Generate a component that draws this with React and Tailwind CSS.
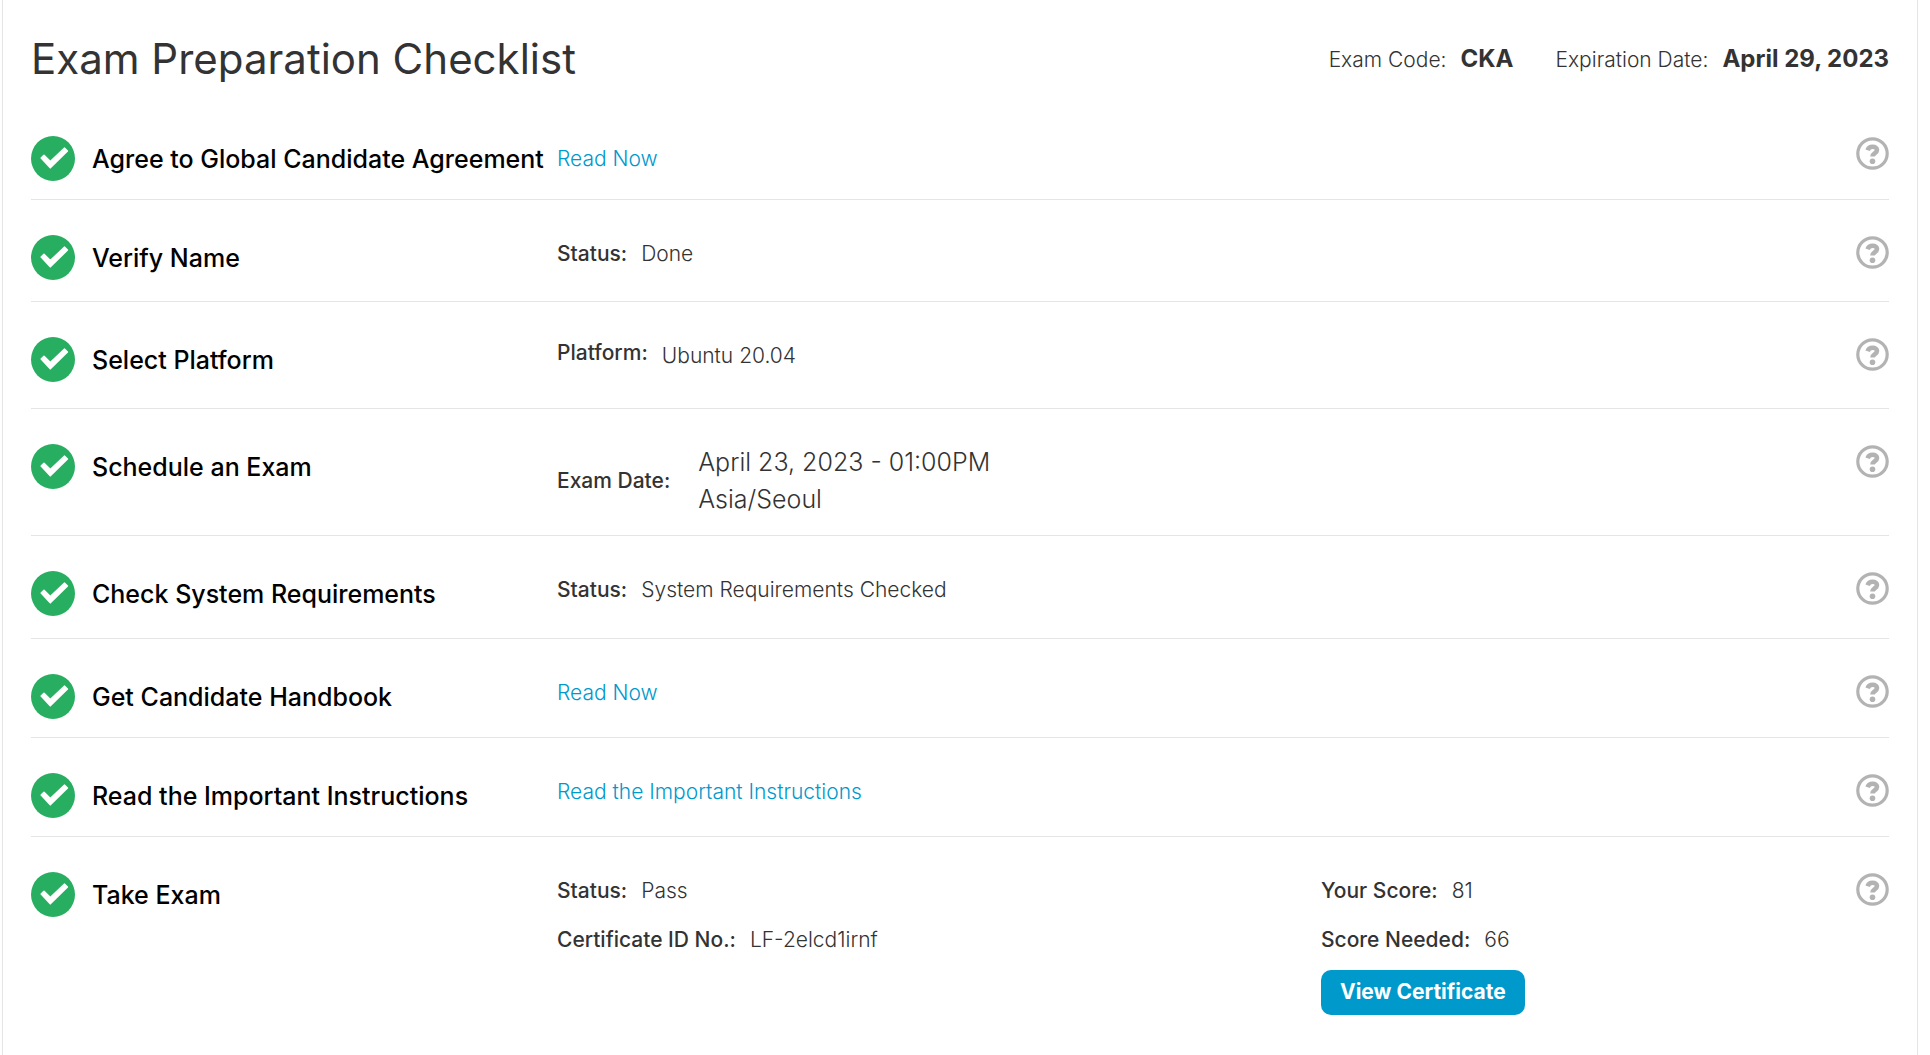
const CheckBadge = () => (
  <svg viewBox="0 0 44 45" className="h-[45px] w-11 shrink-0" role="img" aria-label="Completed">
    <ellipse cx="22" cy="22.5" rx="22" ry="22.5" fill="#27ae60" />
    <path
      d="M10.2 22 L13 19.4 L19.3 25.6 L33.6 12.2 L36.4 15 L19.3 31.8 Z"
      fill="#fff"
      stroke="#fff"
      strokeWidth="1.6"
      strokeLinejoin="round"
    />
  </svg>
);

const HelpButton = ({ topic }) => (
  <button type="button" aria-label={`Help: ${topic}`} className="mt-px size-[33px] shrink-0 cursor-pointer justify-self-end">
    <svg viewBox="0 0 33 33" className="size-[33px]" fill="none" stroke="#b3b3b3" aria-hidden="true">
      <circle cx="16.5" cy="16.5" r="14.7" strokeWidth="3.2" />
      <path d="M11.6 13.2 C12.4 10.8 14.2 9.8 16.6 9.8 C19.4 9.8 21 11.2 21 13.1 C21 16.2 16.5 16 16.5 19.6" strokeWidth="4.6" />
      <circle cx="16.5" cy="24.2" r="2.8" fill="#b3b3b3" stroke="none" />
    </svg>
  </button>
);

const Field = ({ label, children }) => (
  <div className="flex items-baseline gap-[14px]">
    <dt className="font-medium">{label}</dt>
    <dd className="font-light">{children}</dd>
  </div>
);

const TextLink = ({ children }) => (
  <a href="#" className="font-light text-[#0099cc] hover:underline">
    {children}
  </a>
);

const Step = ({ title, pad, detailPad = "pt-1", extra, children }) => (
  <li
    className={`grid grid-cols-[526fr_764fr_535fr_33px] border-b border-[#e5e5e5] pt-[35px] last:border-b-0 ${pad}`}
  >
    <div className="flex items-center gap-[17px] self-start">
      <CheckBadge />
      <h2 className="text-[25px] leading-8 font-medium whitespace-nowrap text-black">{title}</h2>
    </div>
    <div className={detailPad}>{children}</div>
    <div className="pt-1">{extra}</div>
    <HelpButton topic={title} />
  </li>
);

export default function App() {
  return (
    <main className="mr-3 ml-0.5 min-h-screen border-x border-[#e5e5e5] bg-white px-7 pt-7 font-['Inter',sans-serif] text-[21px] leading-[30px] text-[#333]">
      <header className="flex items-center justify-between">
        <h1 className="text-[42px] leading-[62px]">Exam Preparation Checklist</h1>
        <dl className="flex gap-[42px]">
          <div className="flex items-baseline gap-[14px]">
            <dt className="font-light">Exam Code:</dt>
            <dd className="text-2xl font-bold">CKA</dd>
          </div>
          <div className="flex items-baseline gap-[14px]">
            <dt className="font-light">Expiration Date:</dt>
            <dd className="text-2xl font-bold">April 29, 2023</dd>
          </div>
        </dl>
      </header>

      <ol className="pt-[11px]">
        <Step title="Agree to Global Candidate Agreement" pad="pb-[18px]" detailPad="pt-2">
          <TextLink>Read Now</TextLink>
        </Step>
        <Step title="Verify Name" pad="pb-[21px]">
          <dl>
            <Field label="Status:">Done</Field>
          </dl>
        </Step>
        <Step title="Select Platform" pad="pb-[26px]" detailPad="pt-px">
          <dl className="flex gap-[14px]">
            <dt className="font-medium">Platform:</dt>
            <dd className="pt-[3px] font-light">Ubuntu 20.04</dd>
          </dl>
        </Step>
        <Step title="Schedule an Exam" pad="pb-[17px]" detailPad="pt-0">
          <dl className="flex items-center gap-7">
            <dt className="font-medium">Exam Date:</dt>
            <dd className="text-[25px] leading-[37px] font-light">
              April 23, 2023 - 01:00PM
              <br />
              Asia/Seoul
            </dd>
          </dl>
        </Step>
        <Step title="Check System Requirements" pad="pb-[22px]">
          <dl>
            <Field label="Status:">System Requirements Checked</Field>
          </dl>
        </Step>
        <Step title="Get Candidate Handbook" pad="pb-[18px]">
          <TextLink>Read Now</TextLink>
        </Step>
        <Step title="Read the Important Instructions" pad="pb-[18px]">
          <TextLink>Read the Important Instructions</TextLink>
        </Step>
        <Step
          title="Take Exam"
          pad="pb-0"
          extra={
            <>
              <dl className="flex flex-col gap-[19px]">
                <Field label="Your Score:">81</Field>
                <Field label="Score Needed:">66</Field>
              </dl>
              <button
                type="button"
                className="mt-[15px] h-[45px] cursor-pointer rounded-[10px] bg-[#0099cc] px-[19px] pb-0.5 font-bold text-white"
              >
                View Certificate
              </button>
            </>
          }
        >
          <dl className="flex flex-col gap-[19px]">
            <Field label="Status:">Pass</Field>
            <Field label="Certificate ID No.:">LF-2elcd1irnf</Field>
          </dl>
        </Step>
      </ol>
    </main>
  );
}
